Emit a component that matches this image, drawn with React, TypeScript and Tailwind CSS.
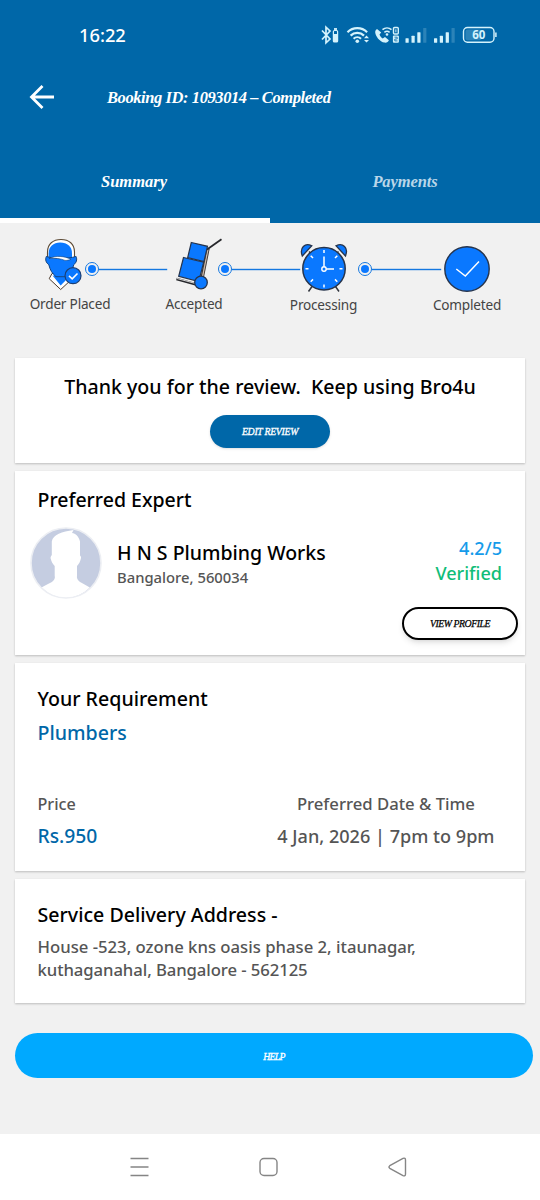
import React from "react";
import clsx from "clsx";

interface IConnector {
  className?: string;
}

interface ICard {
  className?: string;
  children: React.ReactNode;
}

const steps = [
  {id: 1, label: "Order Placed", className: "w-[140px]"},
  {id: 2, label: "Accepted", className: "w-[108px]"},
  {id: 3, label: "Processing", className: "w-[151px] pt-px"},
  {id: 4, label: "Completed", className: "w-[136px] pt-px"},
];

function StatusIcons() {
  return (
    <svg width="176" height="20" viewBox="0 0 176 20" fill="none" className="text-[#d5f3fc]" stroke="currentColor">
      {/* bluetooth */}
      <path d="M1 5.500l8 8.500-4 3.800V2.200l4 3.800-8 8.500" strokeWidth="1.700" />
      <rect x="12.400" y="5.500" width="4.200" height="11.500" rx="1" strokeWidth="1.200" />
      <path d="M13 4h3" strokeWidth="1.800" />
      <path d="M14.500 9v8" strokeWidth="4" />
      {/* wifi */}
      <path d="M26.500 7.200a14 14 0 0 1 19.600 0M29.600 10.600a9.500 9.500 0 0 1 13.400 0M32.600 13.700a5.400 5.400 0 0 1 7.400 0" strokeWidth="2.200" />
      <circle cx="36.300" cy="16.200" r="1.800" fill="currentColor" stroke="none" />
      <path d="M43 13.200l2.500-2.700 2.500 2.700zM43 14.900l2.500 2.700 2.500-2.700z" fill="currentColor" stroke="none" />
      {/* wifi calling */}
      <path
        d="M56 4c-1.800 1-2.200 2.800-1.400 5.200 1.500 4 4.700 7.400 8.700 8.400 2.300.4 3.800-.4 4.600-2.300l-3.900-3.200-2.300 1.500c-1.500-1-2.600-2.300-3.200-4l1.700-2z"
        fill="currentColor"
        stroke="none"
      />
      <path d="M61.500 4.600a7 7 0 0 1 9 0M63.400 7.300a4.200 4.200 0 0 1 5.200 0" strokeWidth="1.600" />
      <circle cx="66" cy="9.500" r="1.300" fill="currentColor" stroke="none" />
      <rect x="72.500" y="2.500" width="4.800" height="6.500" rx="1" strokeWidth="1.400" />
      <path d="M74.900 4.300v3" strokeWidth="1" />
      <rect x="71.900" y="10.400" width="6" height="7.400" rx="1" fill="currentColor" stroke="none" />
      <path d="M73.500 12.200h2.700v1.800h-2.400v1.900h2.700" stroke="#0067a8" strokeWidth=".8" />
      {/* signal bars */}
      <g stroke="none" fill="currentColor">
        <rect x="84.500" y="13.300" width="3.200" height="4.500" rx=".5" />
        <rect x="90.500" y="10.800" width="3.200" height="7" rx=".5" />
        <rect x="96.300" y="7.300" width="3.200" height="10.500" rx=".5" />
        <rect x="102.200" y="3" width="3.200" height="14.800" rx=".5" opacity=".2" />
        <rect x="113" y="13.300" width="3.200" height="4.500" rx=".5" />
        <rect x="118.800" y="10.800" width="3.200" height="7" rx=".5" />
        <rect x="124.700" y="7.300" width="3.200" height="10.500" rx=".5" />
        <rect x="130.500" y="3" width="3.200" height="14.800" rx=".5" opacity=".2" />
      </g>
      {/* battery */}
      <rect x="142.500" y="2.500" width="30.500" height="14.700" rx="4" strokeWidth="1.400" />
      <rect x="144.500" y="4.500" width="16" height="10.700" rx="2" fill="currentColor" stroke="none" opacity=".2" />
      <path d="M174.900 7.500v4.600" strokeWidth="1.500" />
      <text x="157.800" y="14" textAnchor="middle" fontSize="11.500" fontWeight="700" fill="currentColor" stroke="none" className="font-['Open_Sans',sans-serif]">
        60
      </text>
    </svg>
  );
}

function WorkerIcon() {
  return (
    <svg width="44" height="56" viewBox="0 0 44 56" fill="none">
      <path d="M12 35.500l-2.800 5.200L20.700 51.500 32 41l-3-5z" fill="#fff" stroke="#4b3a2c" strokeWidth="1" />
      <path d="M12.500 37.500L20.700 47.500 29 39z" fill="#0a78ff" />
      <path d="M7.500 22V14C7.500 6 13 1.500 21 1.500S34.500 6 34.500 14v8z" fill="#fff" stroke="#5c4a35" strokeWidth="1.100" />
      <path d="M8.600 20V15.500C8.600 8.500 13.500 4.500 20 4.500c7.500 0 12 4 12 11V21z" fill="#0a78ff" />
      <path d="M6.300 18.500c9 2.500 20.500 2.500 29.800 0 1.300 3.300.3 6-2.300 8.200-1.200 5-4 9-8 12H16c-3.800-3-6-7-7.200-12-3-2.200-3.800-5-2.500-8.200z" fill="#0a78ff" stroke="#14447f" strokeWidth="1" />
      <path d="M9 20.500c7-3.200 15.500-2.500 22 .8-2 .9-4 1.200-6 1.100-4.500-1.900-10-2.400-16-1.900z" fill="#fff" stroke="#14447f" strokeWidth=".6" />
      <circle cx="33" cy="37.700" r="8" fill="#0a78ff" stroke="#1c3f73" strokeWidth="1.200" />
      <path d="M29 37.800l3.200 3 5.300-5.300" stroke="#fff" strokeWidth="1.600" />
    </svg>
  );
}

function TrolleyIcon() {
  return (
    <svg width="51" height="56" viewBox="0 0 51 56" fill="none" className="overflow-visible">
      <path d="M41 10.500L34.500 43" stroke="#3b3431" strokeWidth="3.400" />
      <path d="M41 11L34.700 43" stroke="#c9b7a8" strokeWidth="1.300" />
      <path d="M40 11.500L54.500 1.300" stroke="#26272b" strokeWidth="1.800" />
      <path d="M9.500 41L33 47.500" stroke="#26272b" strokeWidth="2.600" />
      <path d="M10 40.500L31.500 46.300" stroke="#fff" strokeWidth=".8" />
      <path d="M24.300 4.500L40.500 8.300l-3.500 15.200-16.300-4z" fill="#0a78ff" stroke="#26344c" strokeWidth="1.200" />
      <path d="M16.500 19.500l20.200 4.600-5 19.500-20-5.300z" fill="#0a78ff" stroke="#26344c" strokeWidth="1.200" />
      <circle cx="34" cy="44.500" r="6.300" fill="#0a78ff" stroke="#26344c" strokeWidth="1.300" />
    </svg>
  );
}

function AlarmIcon() {
  return (
    <svg width="50" height="56" viewBox="0 0 50 56" fill="none">
      <path d="M12 48.500L8.500 53.500M35.500 48.500L39 53.500M9 13.500l3 3M38.500 13.500l-3 3" stroke="#33373f" strokeWidth="1.500" />
      <path d="M2.300 18C-.8 9.500 5 4.500 11.800 7.800z" fill="#0a78ff" stroke="#26344c" strokeWidth="1.300" />
      <path d="M45.500 18C48.800 9.500 42.800 4.500 36 7.800z" fill="#0a78ff" stroke="#26344c" strokeWidth="1.300" />
      <circle cx="24" cy="30.700" r="21.200" fill="#0a78ff" stroke="#26344c" strokeWidth="1.500" />
      <path
        d="M24 12v3M24 46.500v3M5.500 30.700h3M39.500 30.700h3M10.700 17.700l2.300 2.300M37.300 17.700l-2.300 2.300M10.700 43.700l2.300-2.300M37.300 43.700l-2.300-2.300M24 18.500v10M26.200 31H34"
        stroke="#fff"
        strokeWidth="1.500"
      />
      <circle cx="24" cy="31" r="2.200" stroke="#fff" strokeWidth="1.400" />
    </svg>
  );
}

function CompletedIcon() {
  return (
    <svg width="46" height="56" viewBox="0 0 46 56" fill="none">
      <circle cx="23" cy="31" r="22.200" fill="#0a78ff" stroke="#26344c" strokeWidth="1.400" />
      <path d="M12.300 31l9 7L35 23.500" stroke="#fff" strokeWidth="1.500" />
    </svg>
  );
}

function Connector(props: IConnector) {
  return (
    <div className={clsx("mt-6 flex h-3.5 items-center", props.className)}>
      <div className="flex h-3.5 w-3.5 shrink-0 items-center justify-center rounded-full border-[1.5px] border-[#1477e0]">
        <div className="h-2 w-2 rounded-full bg-[#0a78ff]" />
      </div>
      <div className="h-px grow bg-[#1477e0] shadow-[0_0_0_0.2px_#1477e0]" />
    </div>
  );
}

function Avatar() {
  return (
    <svg width="72" height="72" viewBox="0 0 72 72" className="shrink-0">
      <circle cx="36" cy="36" r="35" fill="#c5cde1" />
      <path
        d="M11.500 60.500c3-2 6-3.200 9.500-5 2.500-1.500 4.500-4 3.700-6.500v-10c-2.200-2-3.400-5-4.200-8 0-1 .5-2 1.300-3V14.500C23 7.500 32 4.500 43.500 3l-1.500 3c3.500.5 7 3.500 8 8.500v14c.8.7 1.200 1.500 1 2.500-.6 3-1.900 6-4 8v10c-.6 2.500 1.500 5 4 6.500 3 1.800 6 3 8.800 5A35 35 0 0 1 36 71a35 35 0 0 1-24.500-10.500z"
        fill="#fff"
      />
      <circle cx="36" cy="36" r="35" fill="none" stroke="#eceef3" strokeWidth="1.600" />
    </svg>
  );
}

function Card(props: ICard) {
  return <section className={clsx("mx-[15px] bg-white shadow-[0_1px_2px_rgba(0,0,0,0.22)]", props.className)}>{props.children}</section>;
}

function App() {
  return (
    <div className="flex h-[1200px] w-[540px] flex-col overflow-hidden bg-[#f1f1f1] font-['Noto_Sans','Open_Sans',sans-serif] font-medium whitespace-nowrap text-black">
      <header className="h-[223px] bg-[#0067a8] text-white">
        <div className="flex h-[70px] items-center justify-between pr-[43px] pl-[79px]">
          <span className="text-[18.3px] leading-6">16:22</span>
          <StatusIcons />
        </div>
        <div className="flex h-[54px] items-center pl-[29px]">
          <svg width="26" height="26" viewBox="0 0 26 26" fill="none" stroke="#fff" strokeWidth="2.800">
            <path d="M25 13H3M13.500 2L2.500 13l11 11" />
          </svg>
          <h1 className="ml-[52px] pt-0.5 font-['Liberation_Serif',serif] text-[16.5px] font-bold tracking-[-0.42px] italic">
            Booking ID: 1093014 – Completed
          </h1>
        </div>
        <nav className="flex h-[99px] font-['Liberation_Serif',serif] text-[16.5px] font-bold italic">
          <div className="flex w-1/2 items-center justify-center border-b-[5px] border-white pt-[27px]">
            <span className="pr-0.5 pb-1">Summary</span>
          </div>
          <div className="flex w-1/2 items-center justify-center pt-[22px] text-[#b9d6e9]">
            <span className="pb-1 tracking-[-0.1px]">Payments</span>
          </div>
        </nav>
      </header>

      <div className="h-[135px] pt-[15px]">
        <div className="flex h-[56px] pl-10">
          <WorkerIcon />
          <Connector className="ml-px w-[82px]" />
          <TrolleyIcon />
          <Connector className="w-[82px]" />
          <AlarmIcon />
          <Connector className="ml-2 w-[83px]" />
          <div className="ml-[3px]">
            <CompletedIcon />
          </div>
        </div>
        <div className="flex text-center text-[13.6px] leading-5 font-normal tracking-[-0.2px] text-[#444]">
          {steps.map((item) => {
            return (
              <div key={item.id} className={item.className}>
                {item.label}
              </div>
            );
          })}
        </div>
      </div>

      <Card className="flex h-[105px] flex-col items-center pt-[15px]">
        <p className="text-[19.6px] leading-7 whitespace-pre">Thank you for the review.  Keep using Bro4u</p>
        <button className="mt-[14px] h-[33px] w-[120px] rounded-full bg-[#0067a8] pt-0.5 font-['Liberation_Serif',serif] text-[9.8px] font-normal tracking-[-0.3px] text-white italic shadow-sm [-webkit-text-stroke:0.3px]">
          EDIT REVIEW
        </button>
      </Card>

      <Card className="mt-2 h-[184px] pt-[15px]">
        <h2 className="pl-[22.5px] text-[19.5px] leading-7">Preferred Expert</h2>
        <div className="flex pt-[13px] pr-[23px] pl-[15px]">
          <Avatar />
          <div className="ml-[15px] pt-[12px]">
            <div className="text-[19.5px] leading-7">H N S Plumbing Works</div>
            <div className="text-[14.8px] leading-5 text-[#555]">Bangalore, 560034</div>
          </div>
          <div className="ml-auto pt-[9px] text-right text-[18.1px] leading-[25px]">
            <div className="text-[#159bea]">4.2/5</div>
            <div className="text-[#10bd78]">Verified</div>
          </div>
        </div>
        <div className="flex justify-end pt-[8px] pr-[7px]">
          <button className="h-[33px] w-[116px] rounded-full border-2 border-black pt-px font-['Liberation_Serif',serif] text-[9.8px] font-normal tracking-[-0.45px] italic shadow-md [-webkit-text-stroke:0.25px]">
            VIEW PROFILE
          </button>
        </div>
      </Card>

      <Card className="mt-2 h-[208px] px-[22.5px] pt-[22px]">
        <h2 className="text-[19.6px] leading-7">Your Requirement</h2>
        <div className="mt-[6px] text-[19.6px] leading-7 text-[#0067a8]">Plumbers</div>
        <div className="mt-[45px] flex justify-between">
          <div>
            <div className="text-[16.2px] leading-6 text-[#555]">Price</div>
            <div className="mt-[6px] text-[19.3px] leading-7 text-[#0067a8]">Rs.950</div>
          </div>
          <div className="mr-2 text-center text-[#555]">
            <div className="text-[16.7px] leading-6">Preferred Date &amp; Time</div>
            <div className="mt-[6px] text-[18.1px] leading-7">4 Jan, 2026 | 7pm to 9pm</div>
          </div>
        </div>
      </Card>

      <Card className="mt-2 h-[124px] px-[22.5px] pt-[22px]">
        <h2 className="text-[19.6px] leading-7">Service Delivery Address -</h2>
        <p className="mt-[6px] text-[16.7px] leading-[23px] text-[#555]">
          House -523, ozone kns oasis phase 2, itaunagar,
          <br />
          <span className="tracking-[-0.08px]">kuthaganahal, Bangalore - 562125</span>
        </p>
      </Card>

      <button className="mt-[30px] ml-[15px] h-[45px] w-[518px] shrink-0 rounded-full bg-[#00a9ff] pt-[3px] font-['Liberation_Serif',serif] text-[9.8px] font-normal tracking-[-0.7px] text-white italic [-webkit-text-stroke:0.3px]">
        HELP
      </button>

      <footer className="mt-auto h-[66px] shrink-0 bg-white">
        <svg width="540" height="66" viewBox="0 0 540 66" fill="none" stroke="#858585" strokeWidth="1.400">
          <path d="M130.500 24.500h18M130.500 33h18M130.500 41.500h18" />
          <rect x="260" y="24.500" width="17" height="17" rx="4" />
          <path d="M389.800 31.700l13.200-7.300q2.500-.9 2.500 1.600v14q0 2.500-2.500 1.600l-13.200-7.300q-1.700-1.300 0-2.600z" />
        </svg>
      </footer>
    </div>
  );
}

export default App;
